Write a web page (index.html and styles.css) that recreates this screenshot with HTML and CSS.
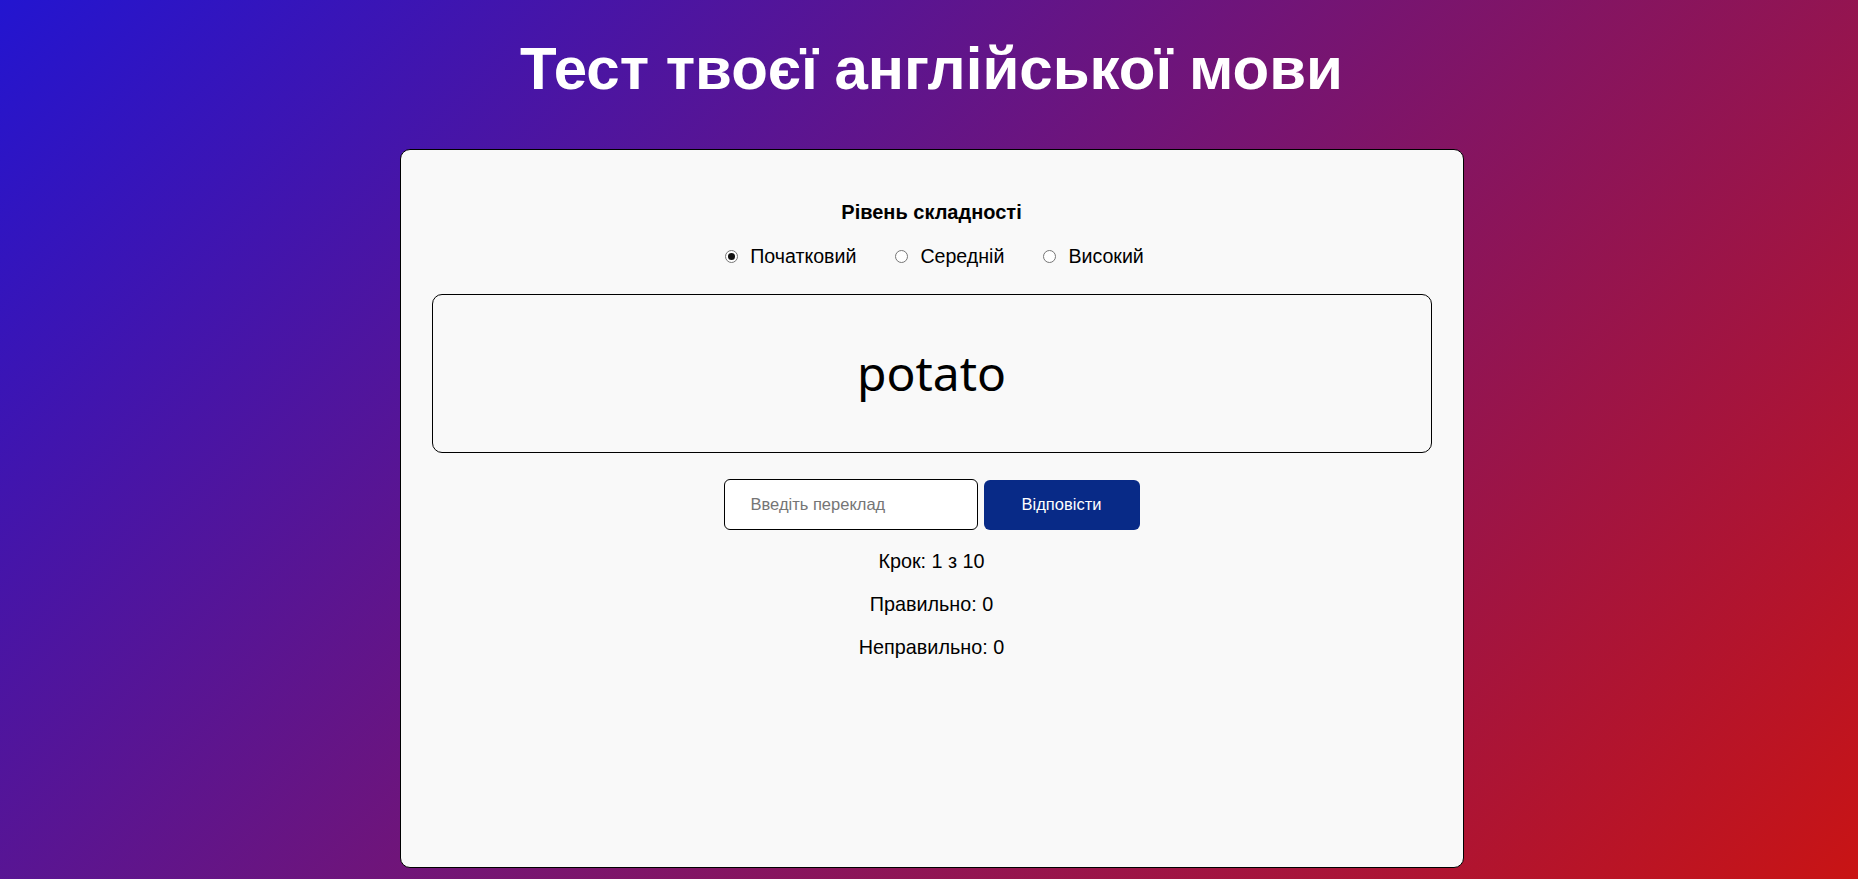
FILE: index.html
```html
<!DOCTYPE html>
<html lang="uk">
<head>
<meta charset="utf-8">
<title>Тест твоєї англійської мови</title>
<link rel="stylesheet" href="styles.css">
</head>
<body>
<div class="page">
  <h1 class="title">Тест твоєї англійської мови</h1>
  <main class="card">
    <h3 class="level-title">Рівень складності</h3>
    <div class="levels">
      <label class="option"><input type="radio" name="level" class="radio" checked><span>Початковий</span></label>
      <label class="option"><input type="radio" name="level" class="radio"><span>Середній</span></label>
      <label class="option"><input type="radio" name="level" class="radio"><span>Високий</span></label>
    </div>
    <div class="word-box"><span class="word">potato</span></div>
    <div class="controls">
      <input type="text" class="answer" placeholder="Введіть переклад">
      <button class="submit">Відповісти</button>
    </div>
    <p class="stat">Крок: 1 з 10</p>
    <p class="stat">Правильно: 0</p>
    <p class="stat">Неправильно: 0</p>
  </main>
</div>
</body>
</html>
```

FILE: styles.css
```css
html, body {
  margin: 0;
  padding: 0;
  height: 100%;
}
body {
  background: linear-gradient(135deg, #2315d0 0%, #c91414 100%);
  font-family: "Liberation Sans", Arial, sans-serif;
  color: #000;
  overflow: hidden;
}
.page {
  display: flex;
  flex-direction: column;
  align-items: center;
  padding: 34px 0 0 5px;
}
.title {
  margin: 0;
  font-size: 60px;
  line-height: 70px;
  font-weight: bold;
  color: #fff;
}
.card {
  box-sizing: border-box;
  width: 1064px;
  height: 719px;
  margin-top: 45px;
  background: #f9f9f9;
  border: 1px solid #000;
  border-radius: 10px;
  padding: 51px 31px 0;
  display: flex;
  flex-direction: column;
  align-items: center;
}
.level-title {
  margin: 0;
  font-size: 20px;
  line-height: 23px;
  font-weight: bold;
}
.levels {
  display: flex;
  gap: 39px;
  margin-top: 20px;
  padding-left: 6px;
  font-size: 19.6px;
  line-height: 24px;
}
.option {
  display: flex;
  align-items: center;
  gap: 12px;
}
.radio {
  appearance: none;
  -webkit-appearance: none;
  box-sizing: border-box;
  width: 13px;
  height: 13px;
  margin: 0;
  border: 1px solid #767676;
  border-radius: 50%;
  background: #fff;
  display: grid;
  place-items: center;
}
.radio:checked::before {
  content: "";
  width: 7px;
  height: 7px;
  border-radius: 50%;
  background: #111;
}
.word-box {
  box-sizing: border-box;
  width: 1000px;
  height: 159px;
  margin-top: 26px;
  border: 1px solid #000;
  border-radius: 10px;
  display: flex;
  align-items: center;
  justify-content: center;
}
.word {
  font-family: "Noto Sans", "DejaVu Sans", sans-serif;
  font-size: 48px;
  line-height: 60px;
  margin-top: -1px;
}
.controls {
  display: flex;
  align-items: center;
  gap: 6px;
  margin-top: 26px;
}
.answer {
  box-sizing: border-box;
  width: 254px;
  height: 51px;
  margin: 0;
  padding: 0 0 0 26px;
  border: 1px solid #000;
  border-radius: 6px;
  background: #fff;
  font-family: "Liberation Sans", Arial, sans-serif;
  font-size: 16.5px;
  outline: none;
}
.answer::placeholder {
  color: #757575;
}
.submit {
  box-sizing: border-box;
  width: 156px;
  height: 50px;
  margin: 0;
  border: none;
  border-radius: 6px;
  background: #082a87;
  color: #fff;
  font-family: "Liberation Sans", Arial, sans-serif;
  font-size: 16.5px;
}
.stat {
  margin: 19px 0 0;
  font-size: 19.8px;
  line-height: 24px;
}
.stat + .stat {
  margin-top: 19px;
}
```
